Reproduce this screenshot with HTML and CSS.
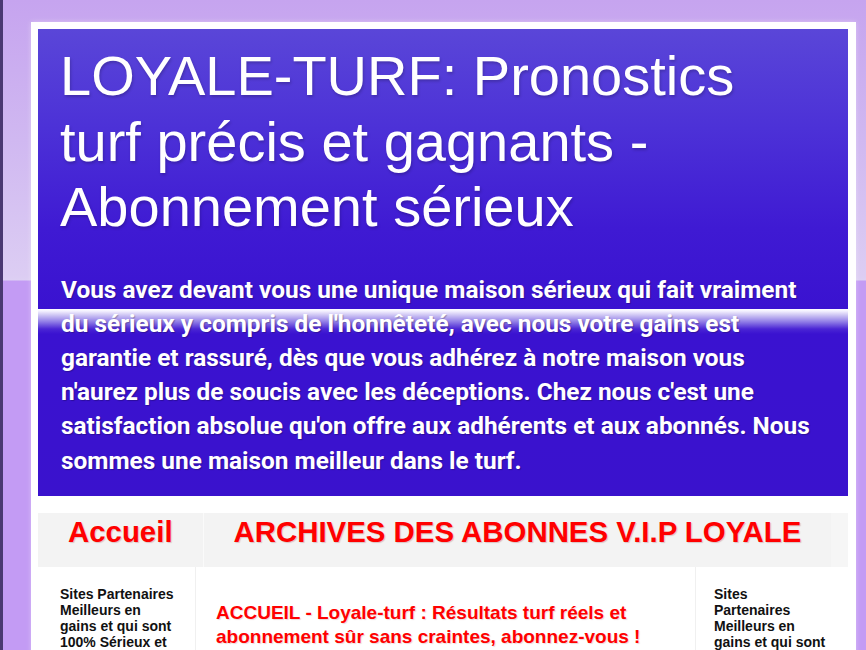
FILE: index.html
```html
<!DOCTYPE html>
<html lang="fr">
<head>
<meta charset="utf-8">
<title>LOYALE-TURF</title>
<link rel="stylesheet" href="styles.css">
</head>
<body>
<div class="page">
  <div class="content-outer">
    <header class="header">
      <h1 class="title">LOYALE-TURF: Pronostics turf précis et gagnants - Abonnement sérieux</h1>
      <p class="description">Vous avez devant vous une unique maison sérieux qui fait vraiment du sérieux y compris de l'honnêteté, avec nous votre gains est garantie et rassuré, dès que vous adhérez à notre maison vous n'aurez plus de soucis avec les déceptions. Chez nous c'est une satisfaction absolue qu'on offre aux adhérents et aux abonnés. Nous sommes une maison meilleur dans le turf.</p>
    </header>
    <nav class="tabs">
      <ul class="tab-list">
        <li class="tab"><a class="tab-link" href="#">Accueil</a></li>
        <li class="tab"><a class="tab-link" href="#">ARCHIVES DES ABONNES V.I.P LOYALE</a></li>
      </ul>
    </nav>
    <div class="columns">
      <aside class="sidebar sidebar-left">
        <h2 class="widget-title">Sites Partenaires Meilleurs en gains et qui sont 100% Sérieux et fiables</h2>
      </aside>
      <main class="main">
        <h2 class="post-title">ACCUEIL - Loyale-turf : Résultats turf réels et abonnement sûr sans craintes, abonnez-vous !</h2>
        <p class="post-meta">Pronostics turf du jour, résultats et archives des abonnés</p>
      </main>
      <aside class="sidebar sidebar-right">
        <h2 class="widget-title">Sites Partenaires Meilleurs en gains et qui sont 100% Sérieux et fiables</h2>
      </aside>
    </div>
  </div>
</div>
</body>
</html>
```
FILE: styles.css
```css
html {
  background: #c39bf4;
}
body {
  margin: 0;
  min-height: 650px;
  border-left: 3px solid #4a3872;
  background: linear-gradient(to bottom, #c6a4ef 0, #d0b8f1 140px, #dccdf3 276px, #ddd0f3 280px, #c39bf4 281px, #c39bf4 100%);
  font-family: "Liberation Sans", Arial, sans-serif;
  overflow: hidden;
}
.page {
  padding: 22px 0 0 28px;
}
.content-outer {
  width: 810px;
  background: #fff;
  padding: 7px 8px 0 7px;
  box-shadow: 0 0 5px rgba(255, 255, 255, 0.35);
  min-height: 700px;
}
.header {
  padding: 14px 30px 18px 22px;
  background: linear-gradient(to bottom,
    #5a46d8 0,
    #4c31d7 100px,
    #3f1ad3 200px,
    #3a12d0 280px,
    #ffffff 280px,
    #f4f1ff 282px,
    #cfc6f4 286px,
    #8e7ae6 293px,
    #4a25d4 300px,
    #3a12d0 305px,
    #3a12cd 100%);
  color: #fff;
}
.title {
  margin: 0;
  font-family: "Liberation Sans", Arial, sans-serif;
  font-weight: normal;
  font-size: 56px;
  line-height: 65.5px;
  color: #fff;
  text-shadow: 1px 2px 3px rgba(0, 0, 0, 0.2);
}
.description {
  margin: 33px 0 0 1px;
  font-family: Roboto, "Liberation Sans", sans-serif;
  font-weight: 700;
  font-size: 24.4px;
  line-height: 34.2px;
  color: #fff;
  text-shadow: 1px 1px 1px rgba(0, 0, 0, 0.25);
}
.tabs {
  margin-top: 17px;
  background: #f6f6f6;
}
.tab-list {
  display: flex;
  margin: 0;
  padding: 0;
  list-style: none;
}
.tab {
  background: #f3f3f3;
}
.tab + .tab {
  border-left: 1px solid #fafafa;
}
.tab-link {
  display: block;
  padding: 2px 30px 19px;
  font-family: "Liberation Sans", Arial, sans-serif;
  font-weight: bold;
  font-size: 29.4px;
  line-height: 33px;
  color: #f00;
  text-decoration: none;
  text-shadow: 1px 1px 1px rgba(120, 0, 0, 0.2);
}
.columns {
  display: flex;
  align-items: stretch;
}
.sidebar {
  flex: none;
}
.sidebar-left {
  width: 118px;
  padding: 19px 17px 0 22px;
  border-right: 1px solid #f0f0f0;
}
.sidebar-right {
  width: 112px;
  padding: 19px 22px 0 18px;
  border-left: 1px solid #f0f0f0;
}
.widget-title {
  margin: 0;
  font-family: "Liberation Sans", Arial, sans-serif;
  font-weight: bold;
  font-size: 14px;
  line-height: 16px;
  color: #111;
}
.main {
  flex: 1;
  padding: 34px 20px 0 20px;
}
.post-title {
  margin: 0;
  font-family: "Liberation Sans", Arial, sans-serif;
  font-weight: bold;
  font-size: 19px;
  line-height: 24px;
  color: #f00;
  text-shadow: 1px 1px 1px rgba(120, 0, 0, 0.15);
}
.post-meta {
  margin: 0;
  font-size: 13px;
  line-height: 18px;
  color: #999;
}
```
